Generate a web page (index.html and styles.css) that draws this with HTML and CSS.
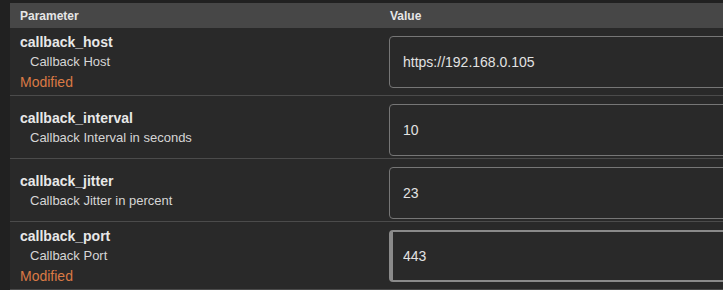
FILE: index.html
```html
<!DOCTYPE html>
<html lang="en">
<head>
  <meta charset="UTF-8" />
  <title>Build Parameters</title>
  <link rel="stylesheet" href="styles.css">
</head>
<body>
  <div class="params">
    <table class="param-table">
      <thead>
        <tr>
          <th class="col-name">Parameter</th>
          <th class="col-value">Value</th>
        </tr>
      </thead>
      <tbody>
        <tr>
          <td class="name-cell">
            <div class="param-name">callback_host</div>
            <div class="param-desc">Callback Host</div>
            <div class="param-modified">Modified</div>
          </td>
          <td class="value-cell"><input class="param-input" type="text" value="https://192.168.0.105"></td>
        </tr>
        <tr>
          <td class="name-cell">
            <div class="param-name">callback_interval</div>
            <div class="param-desc">Callback Interval in seconds</div>
          </td>
          <td class="value-cell"><input class="param-input" type="text" value="10"></td>
        </tr>
        <tr>
          <td class="name-cell">
            <div class="param-name">callback_jitter</div>
            <div class="param-desc">Callback Jitter in percent</div>
          </td>
          <td class="value-cell"><input class="param-input" type="text" value="23"></td>
        </tr>
        <tr>
          <td class="name-cell">
            <div class="param-name">callback_port</div>
            <div class="param-desc">Callback Port</div>
            <div class="param-modified">Modified</div>
          </td>
          <td class="value-cell"><input class="param-input active" type="text" value="443"></td>
        </tr>
      </tbody>
    </table>
  </div>
</body>
</html>
```
FILE: styles.css
```css
/* Basic Reset */
* {
  margin: 0;
  padding: 0;
  box-sizing: border-box;
  font-family: 'Liberation Sans', Arial, sans-serif;
}

body {
  background: #212121;
  color: #e4e4e4;
  overflow: hidden;
}

/* Table wrapper */
.params {
  padding: 3px 0 0 10px;
}

.param-table {
  width: 780px;
  border-collapse: collapse;
  background: #292929;
  table-layout: fixed;
}

/* Header */
.param-table th {
  height: 25px;
  padding: 0 10px;
  background: #474747;
  color: #e6e6e6;
  font-size: 12px;
  font-weight: bold;
  text-align: left;
}

.col-name {
  width: 370px;
}

/* Rows */
.param-table td {
  border-bottom: 1px solid #4b4b4b;
}

.name-cell {
  padding: 4px 10px 3px;
  vertical-align: middle;
}

.param-name {
  font-size: 14px;
  font-weight: bold;
  line-height: 20px;
  color: #e8e8e8;
}

.param-desc {
  padding-left: 10px;
  font-size: 13px;
  line-height: 20px;
  color: #d6d6d6;
}

.param-modified {
  font-size: 14px;
  line-height: 20px;
  color: #d97a45;
}

.value-cell {
  padding: 8px 0 2px 9px;
  vertical-align: top;
}

.param-input {
  display: block;
  width: 100%;
  height: 52px;
  padding: 0 13px;
  background: #292929;
  border: 1px solid #767676;
  border-radius: 4px;
  color: #e2e2e2;
  font-size: 14px;
  outline: none;
}

.param-input.active {
  border: 2px solid #8a8a8a;
  border-left-width: 4px;
  padding-left: 10px;
}
```
